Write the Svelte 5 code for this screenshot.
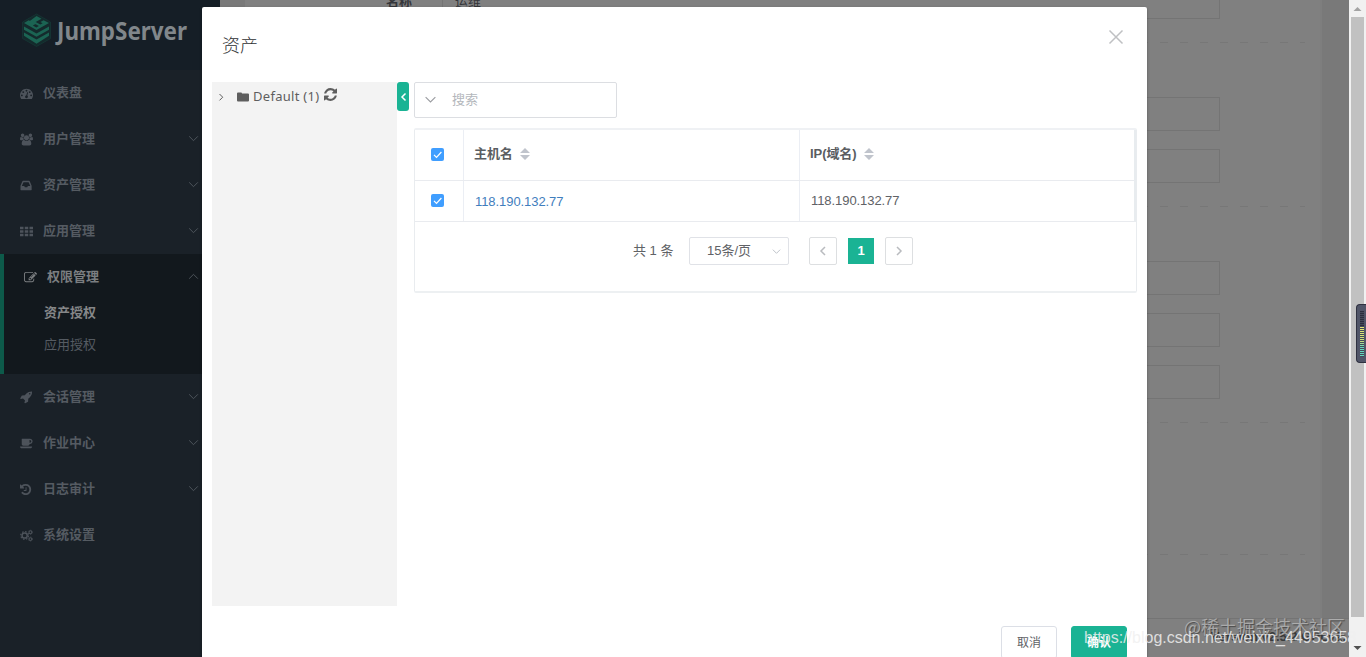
<script>
  const icons = {
    dashboard: { box: '0 0 1792 1792', d: 'M384 1152q0-53-37.5-90.5t-90.5-37.5-90.5 37.5-37.5 90.5 37.5 90.5 90.5 37.5 90.5-37.5 37.5-90.5zm192-448q0-53-37.5-90.5t-90.5-37.5-90.5 37.5-37.5 90.5 37.5 90.5 90.5 37.5 90.5-37.5 37.5-90.5zm428 481l101-382q6-26-7.5-48.5t-38.5-29.5-48 6.5-30 39.5l-101 382q-60 5-107 43.5t-63 98.5q-20 77 20 146t117 89 146-20 89-117q16-60-6-117t-72-91zm660-33q0-53-37.5-90.5t-90.5-37.5-90.5 37.5-37.5 90.5 37.5 90.5 90.5 37.5 90.5-37.5 37.5-90.5zm-640-640q0-53-37.5-90.5t-90.5-37.5-90.5 37.5-37.5 90.5 37.5 90.5 90.5 37.5 90.5-37.5 37.5-90.5zm448 192q0-53-37.5-90.5t-90.5-37.5-90.5 37.5-37.5 90.5 37.5 90.5 90.5 37.5 90.5-37.5 37.5-90.5zm320 448q0 261-141 483-19 29-54 29h-1402q-35 0-54-29-141-221-141-483 0-182 71-348t191-286 286-191 348-71 348 71 286 191 191 286 71 348z' },
    group: { box: '0 0 1920 1792', d: 'M593 896q-162 5-265 128h-134q-82 0-138-40.5t-56-118.5q0-353 124-353 6 0 43.5 21t97.5 42.5 119 21.5q67 0 133-23-5 37-5 66 0 139 81 256zm1071 637q0 120-73 189.5t-194 69.5h-874q-121 0-194-69.5t-73-189.5q0-53 3.5-103.5t14-109 26.5-108.5 43-97.5 62-81 85.5-53.5 111.5-20q10 0 43 21.5t73 48 107 48 135 21.5 135-21.5 107-48 73-48 43-21.5q61 0 111.5 20t85.5 53.5 62 81 43 97.5 26.5 108.5 14 109 3.5 103.5zm-1024-1277q0 106-75 181t-181 75-181-75-75-181 75-181 181-75 181 75 75 181zm704 384q0 159-112.5 271.5t-271.5 112.5-271.5-112.5-112.5-271.5 112.5-271.5 271.5-112.5 271.5 112.5 112.5 271.5zm576 225q0 78-56 118.5t-138 40.5h-134q-103-123-265-128 81-117 81-256 0-29-5-66 66 23 133 23 59 0 119-21.5t97.5-42.5 43.5-21q124 0 124 353zm-128-609q0 106-75 181t-181 75-181-75-75-181 75-181 181-75 181 75 75 181z' },
    inbox: { box: '60 0 1792 1792', d: 'M1151 960h316q-1-3-2.5-8.5t-2.5-7.5l-212-496h-708l-212 496q-1 3-2.5 8.5t-2.5 7.5h316l95 192h320zm513 30v482q0 26-19 45t-45 19h-1408q-26 0-45-19t-19-45v-482q0-62 25-123l238-552q10-25 36.5-42t52.5-17h832q26 0 52.5 17t36.5 42l238 552q25 61 25 123z' },
    th: { box: '0 0 1792 1792', d: 'M0 256h480v340H0zM656 256h480v340H656zM1312 256h480v340h-480zM0 726h480v340H0zM656 726h480v340H656zM1312 726h480v340h-480zM0 1196h480v340H0zM656 1196h480v340H656zM1312 1196h480v340h-480z' },
    edit: { box: '0 0 1792 1792', d: 'M888 1184l116-116-152-152-116 116v56h96v96h56zm440-720q-16-16-33 1l-350 350q-17 17-1 33t33-1l350-350q17-17 1-33zm80 594v190q0 119-84.5 203.5t-203.5 84.5h-832q-119 0-203.5-84.5t-84.5-203.5v-832q0-119 84.5-203.5t203.5-84.5h832q63 0 117 25 15 7 18 23 3 17-9 29l-49 49q-14 14-32 8-23-6-45-6h-832q-66 0-113 47t-47 113v832q0 66 47 113t113 47h832q66 0 113-47t47-113v-126q0-13 9-22l64-64q15-15 35-7t20 29zm-96-738l288 288-672 672h-288v-288zm444 132l-92 92-288-288 92-92q28-28 68-28t68 28l152 152q28 28 28 68t-28 68z' },
    rocket: { box: '0 64 1792 1792', d: 'M1440 448q0-40-28-68t-68-28-68 28-28 68 28 68 68 28 68-28 28-68zm224-288q0 249-75.5 430.5t-253.5 360.5q-81 80-195 176l-20 379q-2 16-16 26l-384 224q-7 4-16 4-12 0-23-9l-64-64q-13-14-8-32l85-276-281-281-276 85q-3 1-9 1-14 0-23-9l-64-64q-17-19-5-39l224-384q10-14 26-16l379-20q96-114 176-195 188-187 358-258t431-71q14 0 24 9.5t10 22.5z' },
    coffee: { box: '0 64 1920 1792', d: 'M1664 640q0-80-56-136t-136-56h-64v384h64q80 0 136-56t56-136zm-1664 768h1792q0 106-75 181t-181 75h-1280q-106 0-181-75t-75-181zm1856-768q0 159-112.5 271.5t-271.5 112.5h-64v32q0 92-66 158t-158 66h-704q-92 0-158-66t-66-158v-736q0-26 19-45t45-19h1152q159 0 271.5 112.5t112.5 271.5z' },
    history: { box: '128 0 1792 1792', d: 'M1664 896q0 156-61 298t-164 245-245 164-298 61q-172 0-327-72.5t-264-204.5q-7-10-6.5-22.5t8.5-20.5l137-138q10-9 25-9 16 2 23 12 73 95 179 147t225 52q104 0 198.5-40.5t163.5-109.5 109.5-163.5 40.5-198.5-40.5-198.5-109.5-163.5-163.5-109.5-198.5-40.5q-98 0-188 35.5t-160 101.5l137 138q31 30 14 69-17 40-59 40h-448q-26 0-45-19t-19-45v-448q0-42 40-59 39-17 69 14l130 129q107-101 244.5-156.5t284.5-55.5q156 0 298 61t245 164 164 245 61 298zm-640-288v448q0 14-9 23t-23 9h-320q-14 0-23-9t-9-23v-64q0-14 9-23t23-9h224v-352q0-14 9-23t23-9h64q14 0 23 9t9 23z' },
    refresh: { box: '128 128 1536 1536', d: 'M1639 1056q0 5-1 7-64 268-268 434.5t-478 166.5q-146 0-282.5-55t-243.5-157l-129 129q-19 19-45 19t-45-19-19-45v-448q0-26 19-45t45-19h448q26 0 45 19t19 45-19 45l-137 137q71 66 161 102t187 36q134 0 250-65t186-179q11-17 53-117 8-23 30-23h192q13 0 22.5 9.5t9.5 22.5zm25-800v448q0 26-19 45t-45 19h-448q-26 0-45-19t-19-45 19-45l138-138q-148-137-349-137-134 0-250 65t-186 179q-11 17-53 117-8 23-30 23h-199q-13 0-22.5-9.5t-9.5-22.5v-7q65-268 270-434.5t480-166.5q146 0 284 55.5t245 156.5l130-129q19-19 45-19t45 19 19 45z' }
  };

  const menu = [
    { label: '仪表盘', icon: 'dashboard' },
    { label: '用户管理', icon: 'group', arrow: true },
    { label: '资产管理', icon: 'inbox', arrow: true },
    { label: '应用管理', icon: 'th', arrow: true },
    { label: '权限管理', icon: 'edit', arrow: true, children: ['资产授权', '应用授权'] },
    { label: '会话管理', icon: 'rocket', arrow: true },
    { label: '作业中心', icon: 'coffee', arrow: true },
    { label: '日志审计', icon: 'history', arrow: true },
    { label: '系统设置', icon: 'cogs' }
  ];

  // number of inputs in each section of the form behind the dialog
  const sections = [1, 2, 3, 0];

  const columns = ['主机名', 'IP(域名)'];
  let rows = $state([{ hostname: '118.190.132.77', ip: '118.190.132.77', checked: true }]);
  let allChecked = $derived(rows.every((row) => row.checked));

  function toggleAll() {
    const next = !allChecked;
    rows.forEach((row) => (row.checked = next));
  }
</script>

{#snippet icon(name)}
  {#if name === 'cogs'}
    <svg class="icon" viewBox="0 0 14 14" fill="none" stroke="currentColor">
      <circle cx="5" cy="7" r="2.8" stroke-width="1.6" />
      <circle cx="5" cy="7" r="4.2" stroke-width="1.3" stroke-dasharray="1.65 1.649" />
      <circle cx="11.2" cy="3.5" r="1.5" stroke-width="1.1" />
      <circle cx="11.2" cy="3.5" r="2.3" stroke-width=".7" stroke-dasharray="1.2 1.209" />
      <circle cx="11.2" cy="10.8" r="1.5" stroke-width="1.1" />
      <circle cx="11.2" cy="10.8" r="2.3" stroke-width=".7" stroke-dasharray="1.2 1.209" />
    </svg>
  {:else}
    <svg class="icon" viewBox={icons[name].box} fill="currentColor"><path d={icons[name].d} /></svg>
  {/if}
{/snippet}

{#snippet chevron(d, size)}
  <svg class="chevron" width={size} height={size} viewBox="0 0 12 12" fill="none" stroke="currentColor">
    <path {d} />
  </svg>
{/snippet}

{#snippet checkbox(checked, toggle)}
  <button class="check" class:checked aria-label="select" onclick={toggle}>
    <svg width="13" height="13" viewBox="0 0 13 13" fill="none" stroke="#fff" stroke-width="1.2">
      <path d="M3 6.8l2.5 2.6L10.4 4" />
    </svg>
  </button>
{/snippet}

<div class="app">
  <aside class="sidebar">
    <div class="logo">
      <svg width="168" height="40" viewBox="0 0 168 40">
        <path d="M14.5 1L28.5 9v16.500L14.500 33.500.5 25.500V9z" fill="#142a2c" stroke="#163a36" stroke-width=".7" />
        <g fill="#1b6453">
          <path d="M14.500 3l5 2.700-5.800 3.300 4.600 2.600 2.300-1.300-2.200-1.200 3.200-1.900L27 10l-12.500 7L2 10l4.700-2.700 6.800 3.800-2.600 1.500 3.400 1.900 2.600-1.500L7.800 8z" />
          <path d="M2 13.500l12.500 7 12.500-7v3.300l-12.500 7L2 16.800z" />
          <path d="M2 19.500l12.500 7 12.500-7v3.300l-12.500 8L2 22.800z" />
        </g>
        <text x="35" y="27" textLength="130" lengthAdjust="spacingAndGlyphs">JumpServer</text>
      </svg>
    </div>
    <nav>
      {#each menu as item}
        <div class="group" class:open={item.children}>
          <div class="item">
            {@render icon(item.icon)}
            <span>{item.label}</span>
            {#if item.arrow}
              {@render chevron(item.children ? 'M2 8l4-4 4 4' : 'M2 4l4 4 4-4', 13)}
            {/if}
          </div>
          {#each item.children ?? [] as child, i}
            <div class="child" class:current={i === 0}>{child}</div>
          {/each}
        </div>
      {/each}
    </nav>
  </aside>

  <main class="page">
    <div class="panel">
      {#each sections as count, s}
        <section>
          {#each { length: count } as _}
            <div class="field">
              <div class="label">{s === 0 ? '名称' : ''}</div>
              <div class="input">{s === 0 ? '运维' : ''}</div>
            </div>
          {/each}
        </section>
      {/each}
    </div>
    <footer>Version v2.5.2 GPLv2.</footer>
  </main>

  <div class="scrollbar">
    <svg width="17" height="17" viewBox="0 0 17 17"><path d="M4.500 11h8l-4-4z" fill="#a3a3a3" /></svg>
    <div class="thumb"></div>
    <svg width="17" height="17" viewBox="0 0 17 17"><path d="M4.500 6h8l-4 4z" fill="#505050" /></svg>
  </div>

  <div class="dialog">
    <header>
      <h2>资产</h2>
      <svg width="16" height="16" viewBox="0 0 16 16" fill="none" stroke="#bfc0c3" stroke-width="1.5">
        <path d="M1.500 1.500l13 13M14.500 1.500l-13 13" />
      </svg>
    </header>

    <div class="body">
      <div class="tree">
        {@render chevron('M4.500 3L7.700 6.200 4.500 9.400', 12)}
        <svg class="folder" width="12" height="10" viewBox="0 0 12 10" fill="#5e5e5e">
          <path d="M0 1.500Q0 .5 1 .5h3q1 0 1 1h6q1 0 1 1v6q0 1-1 1H1q-1 0-1-1z" />
        </svg>
        <span>Default (1)</span>
        {@render icon('refresh')}
      </div>
      <button class="fold" aria-label="collapse">
        <svg width="8" height="10" viewBox="0 0 8 10" fill="none" stroke="#fff" stroke-width="1.500"><path d="M6.500 1.500L3 5l3.500 3.500" /></svg>
      </button>

      <div class="content">
        <div class="search">
          {@render chevron('M1.500 3.800L6 8.300l4.500-4.500', 13)}
          <span>搜索</span>
        </div>

        <div class="card">
          <div class="table">
            <div class="row head">
              <div class="cell">{@render checkbox(allChecked, toggleAll)}</div>
              {#each columns as column}
                <div class="cell">
                  {column}
                  <svg width="10" height="12" viewBox="0 0 10 12" fill="#c0c4cc"><path d="M0 5h10L5 0zM0 7h10l-5 5z" /></svg>
                </div>
              {/each}
            </div>
            {#each rows as row}
              <div class="row">
                <div class="cell">{@render checkbox(row.checked, () => (row.checked = !row.checked))}</div>
                <div class="cell link">{row.hostname}</div>
                <div class="cell">{row.ip}</div>
              </div>
            {/each}
          </div>

          <div class="pagination">
            <span class="total">共 {rows.length} 条</span>
            <div class="size">15条/页 {@render chevron('M2 4l4 4 4-4', 11)}</div>
            <button class="pager" aria-label="previous">{@render chevron('M8 2L4 6l4 4', 12)}</button>
            <button class="pager active">1</button>
            <button class="pager" aria-label="next">{@render chevron('M4 2l4 4-4 4', 12)}</button>
          </div>
        </div>
      </div>
    </div>

    <div class="actions">
      <button>取消</button>
      <button class="primary">确认</button>
    </div>
  </div>

  <div class="meter"><i></i></div>
  <div class="mark community">@稀土掘金技术社区</div>
  <div class="mark url">https://blog.csdn.net/weixin_44953658</div>
</div>

<style>
  :global(body) {
    overflow: hidden;
  }

  .app {
    position: relative;
    display: flex;
    width: 1366px;
    height: 657px;
    overflow: hidden;
    background: #797979;
    color: #606266;
    font: 13px/18px "Liberation Sans", "Noto Sans CJK SC", sans-serif;
  }

  .app * {
    box-sizing: border-box;
  }

  button {
    padding: 0;
    font: inherit;
    color: inherit;
  }

  svg {
    display: block;
    flex: none;
  }

  /* sidebar */
  .sidebar {
    width: 220px;
    background: #1a2128;
    color: #555b62;
  }

  .logo {
    height: 70px;
    padding: 13px 0 0 22px;
    background: #151e26;
  }

  .logo text {
    font: bold 25px "Noto Sans", sans-serif;
    fill: #81878b;
  }

  .item {
    display: flex;
    align-items: center;
    height: 46px;
    padding: 0 20px;
    font-weight: 600;
  }

  .item .icon {
    width: 13px;
    height: 13px;
    margin-right: 10px;
    color: #4d535b;
  }

  .item .chevron {
    margin: -2px 0 0 auto;
    stroke-width: 0.8;
  }

  .group.open {
    height: 120px;
    border-left: 4px solid #0d5a4a;
    background: #12181d;
  }

  .open .item {
    color: #7b7e81;
  }

  .open .item .icon {
    color: #7b7e81;
  }

  .open .item .chevron {
    color: #555b62;
  }

  .child {
    height: 32px;
    padding-left: 40px;
    line-height: 26px;
  }

  .child.current {
    color: #858789;
    font-weight: 600;
  }

  /* page behind the dialog */
  .page {
    display: flex;
    flex-direction: column;
    width: 1129px;
    padding-left: 25px;
  }

  .panel {
    width: 1077px;
    height: 618px;
    overflow: hidden;
    background: #808080;
    border-right: 2px solid #7e7e7e;
  }

  section {
    width: 1060px;
    margin-top: 55px;
  }

  section:first-child {
    margin-top: -15px;
  }

  section::after {
    content: '';
    display: block;
    height: 1px;
    margin: 0 0 0 15px;
    transform: translateY(23px);
    background: repeating-linear-gradient(90deg, #777 0 8px, #808080 8px 20px);
  }

  section {
    padding-bottom: 22px;
  }

  section:nth-child(4)::after {
    transform: translateY(77px);
  }

  .field {
    display: flex;
    height: 34px;
  }

  .field + .field {
    margin-top: 18px;
  }

  .label {
    width: 197px;
    padding-right: 30px;
    text-align: right;
    line-height: 34px;
    font-weight: bold;
    color: #34363a;
  }

  .input {
    width: 778px;
    padding-left: 12px;
    border: 1px solid #747474;
    line-height: 32px;
    color: #34363a;
  }

  footer {
    height: 39px;
    margin-left: -25px;
    padding: 9px 3px 0 0;
    border-top: 1px solid #747474;
    background: #808080;
    color: #393b3c;
    font-weight: bold;
    text-align: right;
  }

  .scrollbar {
    display: flex;
    flex-direction: column;
    justify-content: space-between;
    width: 17px;
    background: #f1f1f1;
  }

  .scrollbar .thumb {
    height: 600px;
    margin: 0 2px 23px;
    background: #c1c1c1;
  }

  /* dialog */
  .dialog {
    position: absolute;
    top: 7px;
    left: 202px;
    width: 945px;
    height: 700px;
    border-radius: 2px;
    background: #fff;
    box-shadow: 0 1px 3px rgba(0, 0, 0, 0.3);
  }

  header {
    display: flex;
    justify-content: space-between;
    height: 75px;
    padding: 22px 23px 0 20px;
  }

  h2 {
    margin: 5px 0 0;
    color: #303133;
    font-size: 18px;
    font-weight: 300;
    line-height: 24px;
  }

  .body {
    display: flex;
    height: 524px;
    padding: 0 10px;
  }

  .tree {
    display: flex;
    width: 185px;
    padding: 4px 3px;
    background: #f3f3f3;
    color: #5e5e5e;
    font: 13px/20px "Noto Sans", sans-serif;
    letter-spacing: 0.28px;
  }

  .tree .chevron {
    margin: 5px 10px 0 0;
  }

  .tree .folder {
    margin: 6px 4px 0 0;
  }

  .tree .icon {
    width: 13px;
    height: 13px;
    margin: 2px 0 0 5px;
  }

  .fold {
    display: flex;
    align-items: center;
    justify-content: center;
    width: 12px;
    height: 29px;
    border: 0;
    border-radius: 3px;
    background: #1ab394;
  }

  .content {
    width: 723px;
    margin-left: 5px;
  }

  .search {
    display: flex;
    align-items: center;
    width: 203px;
    height: 36px;
    margin-bottom: 10px;
    padding-left: 9px;
    border: 1px solid #dcdee2;
    border-radius: 2px;
    color: #b4b7bc;
  }

  .search .chevron {
    margin: -1px 15px 0 0;
    color: #9a9ca0;
  }

  .card {
    height: 165px;
    border: 1px solid #e9ecef;
    border-top: 2px solid #eff1f4;
    border-bottom: 2px solid #edf0f2;
    border-radius: 2px;
  }

  .table {
    border-right: 2px solid #e8ecef;
  }

  .row {
    display: grid;
    grid-template-columns: 49px 336px 1fr;
    height: 41px;
    border-bottom: 1px solid #e9ebef;
  }

  .head {
    height: 51px;
    color: #5a5d61;
    font-weight: 600;
  }

  .cell {
    display: flex;
    align-items: center;
    padding-left: 11px;
    border-right: 1px solid #ebeef4;
    letter-spacing: -0.07px;
  }

  .head .cell {
    padding: 0 0 2px 10px;
  }

  .cell:first-child,
  .head .cell:first-child {
    padding: 0 0 1px 16px;
  }

  .cell:last-child {
    border-right: 0;
  }

  .cell svg {
    margin-left: 7px;
  }

  .cell.link {
    padding-top: 2px;
    color: #3f7ebd;
  }

  .check {
    width: 13px;
    height: 13px;
    border: 0;
    border-radius: 2px;
    background: #dcdfe6;
  }

  .check.checked {
    background: #409eff;
  }

  .check svg {
    margin: 0;
  }

  .pagination {
    display: flex;
    align-items: center;
    height: 58px;
    padding-left: 218px;
  }

  .total {
    width: 56px;
  }

  .size {
    display: flex;
    align-items: center;
    width: 100px;
    height: 28px;
    margin-right: 20px;
    padding-left: 17px;
    border: 1px solid #e0e2e7;
    border-radius: 2px;
  }

  .size .chevron {
    margin-left: auto;
    margin-right: 6px;
    color: #b9bdc5;
  }

  .pager {
    display: flex;
    align-items: center;
    justify-content: center;
    width: 28px;
    height: 28px;
    margin-right: 10px;
    border: 1px solid #dddfe1;
    border-radius: 2px;
    background: #fff;
    color: #b9bbbf;
  }

  .pager .chevron {
    stroke-width: 1.5;
  }

  .pager.active {
    border-color: #fff;
    border-radius: 0;
    background: #1ab394;
    color: #fff;
    font-weight: bold;
  }

  .actions {
    display: flex;
    justify-content: flex-end;
    gap: 14px;
    padding: 20px 20px 0;
  }

  .actions button {
    width: 56px;
    height: 33px;
    border: 1px solid #dcdfe6;
    border-radius: 3px;
    background: #fff;
    font-size: 12px;
  }

  .actions .primary {
    border-color: #1ab394;
    background: #1ab394;
    color: #fff;
    font-weight: bold;
  }

  /* floating overlays */
  .meter {
    position: absolute;
    top: 304px;
    right: 0;
    width: 10px;
    height: 59px;
    padding: 6px 0 0 3px;
    border: 1px solid #2f3140;
    border-right: 0;
    border-radius: 4px 0 0 4px;
    background: #515568;
  }

  .meter i {
    display: block;
    width: 4px;
    height: 46px;
    background:
      repeating-linear-gradient(transparent 0 1px, #454959 1px 2px),
      linear-gradient(#2b2e3d 0 15px, #e6e873 15px, #c9dc7c 30px, #64d6bd 36px);
  }

  .mark {
    position: absolute;
    white-space: nowrap;
  }

  .community {
    top: 613px;
    left: 1184px;
    color: rgba(190, 190, 190, 0.75);
    font: 18px/26px "Noto Sans CJK SC", sans-serif;
    text-shadow: 1px 1px 1px rgba(50, 50, 50, 0.7);
  }

  .url {
    top: 628px;
    left: 1084px;
    color: rgba(240, 240, 240, 0.85);
    font-size: 16px;
    line-height: 20px;
  }
</style>
